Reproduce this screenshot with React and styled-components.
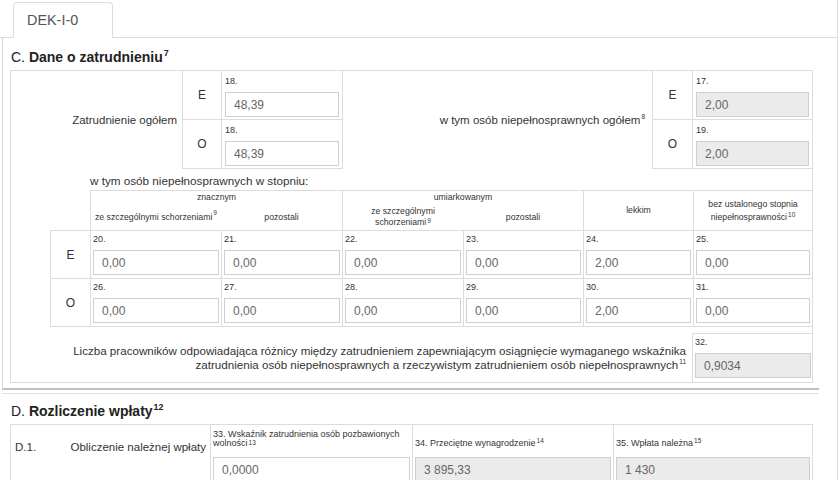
import React from 'react';
import styled, { createGlobalStyle } from 'styled-components';

const GlobalStyle = createGlobalStyle`
  html, body {
    margin: 0;
    padding: 0;
    background: #fff;
  }

  body {
    font-family: "Liberation Sans", Arial, sans-serif;
    color: #333;
  }

  * {
    box-sizing: border-box;
  }
`;

const LINE = '#dcdcdc';

const degreeRows = [
  {
    letter: 'E',
    fields: [
      ['20.', '0,00'],
      ['21.', '0,00'],
      ['22.', '0,00'],
      ['23.', '0,00'],
      ['24.', '2,00'],
      ['25.', '0,00'],
    ],
  },
  {
    letter: 'O',
    fields: [
      ['26.', '0,00'],
      ['27.', '0,00'],
      ['28.', '0,00'],
      ['29.', '0,00'],
      ['30.', '2,00'],
      ['31.', '0,00'],
    ],
  },
];

const Field = ({ num, value, locked }) => (
  <>
    <Num>{num}</Num>
    <Input readOnly value={value} $locked={locked} />
  </>
);

const App = () => {
  return (
    <Page>
      <GlobalStyle />
      <TabBar>
        <Tab>DEK-I-0</Tab>
      </TabBar>

      <SectionC>
        <Heading $top={11}>
          <Mark>C. </Mark>Dane o zatrudnieniu<HeadSup>7</HeadSup>
        </Heading>
        <Box>
          <TopRow>
            <SideLabel>
              <span>Zatrudnienie ogółem</span>
            </SideLabel>
            <Pair $eo={39}>
              <Letter>E</Letter>
              <PairCell>
                <Field num="18." value="48,39" />
              </PairCell>
              <Letter>O</Letter>
              <PairCell>
                <Field num="18." value="48,39" />
              </PairCell>
            </Pair>
            <SideLabel $pad={7}>
              <span>
                w tym osób niepełnosprawnych ogółem<Sup>8</Sup>
              </span>
            </SideLabel>
            <Pair $eo={40}>
              <Letter>E</Letter>
              <PairCell $last>
                <Field num="17." value="2,00" locked />
              </PairCell>
              <Letter>O</Letter>
              <PairCell $last>
                <Field num="19." value="2,00" locked />
              </PairCell>
            </Pair>
          </TopRow>

          <Caption>w tym osób niepełnosprawnych w stopniu:</Caption>

          <Degrees>
            <Corner />
            <GroupHead $area="1 / 2 / 2 / 4">znacznym</GroupHead>
            <GroupHead $area="1 / 4 / 2 / 6">umiarkowanym</GroupHead>
            <TallHead $area="1 / 6 / 3 / 7">
              <span>lekkim</span>
            </TallHead>
            <TallHead $area="1 / 7 / 3 / 8">
              <span>
                bez ustalonego stopnia
                <br />
                niepełnosprawności<Sup $lift={3}>10</Sup>
              </span>
            </TallHead>
            <SubHead $area="2 / 2 / 3 / 3" $edge>
              <span>
                ze szczególnymi schorzeniami<Sup>9</Sup>
              </span>
            </SubHead>
            <SubHead $area="2 / 3 / 3 / 4">
              <span>pozostali</span>
            </SubHead>
            <SubHead $area="2 / 4 / 3 / 5" $edge>
              <span>
                ze szczególnymi
                <br />
                schorzeniami<Sup $lift={2}>9</Sup>
              </span>
            </SubHead>
            <SubHead $area="2 / 5 / 3 / 6">
              <span>pozostali</span>
            </SubHead>

            {degreeRows.map((row, i) => {
              const bottom = i === degreeRows.length - 1;
              return (
                <React.Fragment key={row.letter}>
                  <RowHead $bottom={bottom}>{row.letter}</RowHead>
                  {row.fields.map(([num, value]) => (
                    <DegreeCell key={num} $bottom={bottom}>
                      <Field num={num} value={value} />
                    </DegreeCell>
                  ))}
                </React.Fragment>
              );
            })}
          </Degrees>

          <GapRow>
            <Note>
              <span>
                Liczba pracowników odpowiadająca różnicy między zatrudnieniem
                zapewniającym osiągnięcie wymaganego wskaźnika
                <br />
                zatrudnienia osób niepełnosprawnych a rzeczywistym zatrudnieniem
                osób niepełnosprawnych<Sup>11</Sup>
              </span>
            </Note>
            <NoteCell>
              <Field num="32." value="0,9034" locked />
            </NoteCell>
          </GapRow>
        </Box>
      </SectionC>

      <SectionD>
        <Heading $top={9}>
          <Mark>D. </Mark>Rozliczenie wpłaty<HeadSup>12</HeadSup>
        </Heading>
        <Box>
          <CalcRow>
            <CalcLabel>
              <span>D.1.</span>
              <span>Obliczenie należnej wpłaty</span>
            </CalcLabel>
            <CalcCell>
              <CalcCaption>
                <span>33. Wskaźnik zatrudnienia osób pozbawionych</span>
                <span>
                  wolności<Sup $lift={1}>13</Sup>
                </span>
              </CalcCaption>
              <Input readOnly value="0,0000" />
            </CalcCell>
            <CalcCell>
              <CalcCaption>
                <span>
                  34. Przeciętne wynagrodzenie<Sup $lift={3}>14</Sup>
                </span>
              </CalcCaption>
              <Input readOnly value="3 895,33" $locked />
            </CalcCell>
            <CalcCell>
              <CalcCaption>
                <span>
                  35. Wpłata należna<Sup $lift={3}>15</Sup>
                </span>
              </CalcCaption>
              <Input readOnly value="1 430" $locked />
            </CalcCell>
          </CalcRow>
        </Box>
      </SectionD>
    </Page>
  );
};

const Page = styled.div`
  width: 838px;
  height: 480px;
  overflow: hidden;
  border-right: 1px solid ${LINE};
`;

const TabBar = styled.div`
  display: flex;
  height: 38px;
  padding: 2px 0 0 13px;
  border-bottom: 1px solid ${LINE};
`;

const Tab = styled.div`
  width: 100px;
  height: 36px;
  padding-left: 13px;
  border: 1px solid ${LINE};
  border-bottom-color: #fff;
  border-radius: 4px 4px 0 0;
  background: #fff;
  color: #555;
  font-size: 14.4px;
  line-height: 34px;
`;

const SectionC = styled.section`
  width: 817px;
  margin-left: 2px;
  padding: 0 0 5px 7px;
  border-left: 1px solid #d6d6d6;
  border-bottom: 2px solid #bfbfbf;
`;

const SectionD = styled.section`
  width: 817px;
  margin: 3px 0 0 2px;
  padding-left: 8px;
  border-top: 1px solid #e0e0e0;
`;

const Heading = styled.h3`
  margin: 0;
  padding: ${props => props.$top}px 0 5px 1px;
  font-size: 14px;
  line-height: 16px;
  font-weight: bold;
  color: #222;
`;

const Mark = styled.span`
  font-weight: normal;
`;

const HeadSup = styled.sup`
  position: relative;
  top: -6px;
  margin-left: 1px;
  font-size: 9px;
  line-height: 0;
  vertical-align: baseline;
`;

const Sup = styled.sup`
  position: relative;
  top: -${props => props.$lift ?? 5}px;
  margin-left: 1px;
  font-size: 6.5px;
  line-height: 0;
  vertical-align: baseline;
`;

const Box = styled.div`
  width: 803px;
  border: 1px solid ${LINE};
`;

const TopRow = styled.div`
  display: grid;
  grid-template-columns: 171px 161px 309px 160px;
`;

const SideLabel = styled.div`
  display: flex;
  align-items: center;
  justify-content: flex-end;
  padding-right: ${props => props.$pad || 5}px;
  font-size: 11.5px;
  line-height: 14px;
  white-space: nowrap;
`;

const Pair = styled.div`
  display: grid;
  grid-template-columns: ${props => props.$eo}px 1fr;
  grid-auto-rows: 49px;
  border-left: 1px solid ${LINE};
`;

const Letter = styled.div`
  display: flex;
  align-items: center;
  justify-content: center;
  font-size: 12px;
  border-right: 1px solid ${LINE};
  border-bottom: 1px solid ${LINE};
`;

const PairCell = styled.div`
  padding: 5px 3px 2px;
  border-bottom: 1px solid ${LINE};
  border-right: ${props => (props.$last ? 'none' : `1px solid ${LINE}`)};
`;

const Num = styled.div`
  height: 10px;
  margin-bottom: 6px;
  font-size: 9px;
  line-height: 10px;
  color: #333;
`;

const Input = styled.input`
  display: block;
  width: 100%;
  height: 25px;
  margin: 0;
  padding: 0 8px;
  border: 1px solid #cfcfcf;
  border-radius: 0;
  outline: none;
  background: ${props => (props.$locked ? '#ebebeb' : '#fff')};
  color: #666;
  font-family: "Liberation Sans", Arial, sans-serif;
  font-size: 12px;
`;

const Caption = styled.div`
  padding: 5px 0 2px 79px;
  font-size: 11.7px;
  line-height: 14px;
`;

const Degrees = styled.div`
  display: grid;
  grid-template-columns: 40px 131px 121px 121px 120px 110px 119px;
  grid-template-rows: 14px 26px 48px 49px;
  margin-left: 39px;
`;

const Corner = styled.div`
  grid-area: 1 / 1 / 3 / 2;
`;

const GroupHead = styled.div`
  grid-area: ${props => props.$area};
  padding-top: 1px;
  border-top: 1px solid ${LINE};
  border-left: 1px solid ${LINE};
  text-align: center;
  font-size: 8.7px;
  line-height: 11px;
`;

const TallHead = styled.div`
  grid-area: ${props => props.$area};
  display: flex;
  align-items: center;
  justify-content: center;
  border-top: 1px solid ${LINE};
  border-left: 1px solid ${LINE};
  text-align: center;
  font-size: 8.7px;
  line-height: 13px;
`;

const SubHead = styled.div`
  grid-area: ${props => props.$area};
  display: flex;
  align-items: center;
  justify-content: center;
  border-left: ${props => (props.$edge ? `1px solid ${LINE}` : 'none')};
  text-align: center;
  font-size: 8.7px;
  line-height: 11px;
  white-space: nowrap;
`;

const RowHead = styled.div`
  display: flex;
  align-items: center;
  justify-content: center;
  font-size: 12px;
  border-top: 1px solid ${LINE};
  border-left: 1px solid ${LINE};
  border-bottom: ${props => (props.$bottom ? `1px solid ${LINE}` : 'none')};
`;

const DegreeCell = styled.div`
  padding: 3px 2px 3px;
  border-top: 1px solid ${LINE};
  border-left: 1px solid ${LINE};
  border-bottom: ${props => (props.$bottom ? `1px solid ${LINE}` : 'none')};
`;

const GapRow = styled.div`
  display: grid;
  grid-template-columns: 1fr 120px;
  margin-top: 6px;
`;

const Note = styled.div`
  display: flex;
  align-items: center;
  justify-content: flex-end;
  padding-right: 6px;
  text-align: right;
  font-size: 11.6px;
  line-height: 14px;
  white-space: nowrap;
`;

const NoteCell = styled.div`
  padding: 3px 1px 4px 2px;
  border-top: 1px solid ${LINE};
  border-left: 1px solid ${LINE};
`;

const CalcRow = styled.div`
  display: grid;
  grid-template-columns: 199px 202px 201px 199px;
  height: 62px;
`;

const CalcLabel = styled.div`
  display: flex;
  justify-content: space-between;
  padding: 15px 4px 0;
  font-size: 11.5px;
  line-height: 14px;
`;

const CalcCell = styled.div`
  padding: 2px 2px 0;
  border-left: 1px solid ${LINE};
`;

const CalcCaption = styled.div`
  display: flex;
  flex-direction: column;
  justify-content: flex-end;
  height: 21px;
  margin-bottom: 9px;
  font-size: 9px;
  line-height: 9px;
  white-space: nowrap;
`;

export default App;
